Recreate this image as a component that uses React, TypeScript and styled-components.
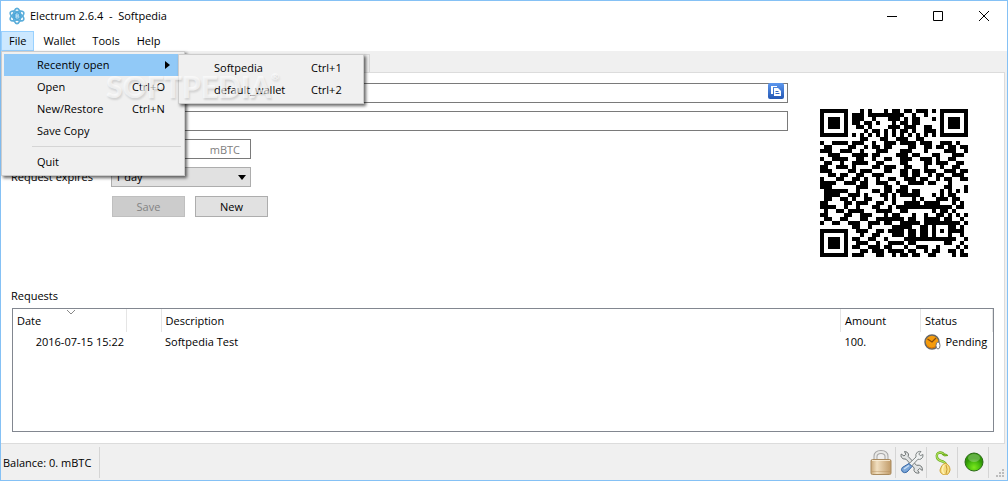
import React from 'react';
import styled, { createGlobalStyle } from 'styled-components';

const GlobalStyle = createGlobalStyle`
  *, *::before, *::after { box-sizing: border-box; }
  body { margin: 0; }
  body, button, input, select, table {
    font-family: "Open Sans", "Noto Sans", sans-serif;
    font-size: 11px;
    line-height: 16px;
    color: #000;
  }
`;

const Window = styled.div`
  display: flex;
  flex-direction: column;
  min-height: 100vh;
  border: 1px solid #85c1f5;
  background: #f0f0f0;
`;

const TitleBar = styled.header`
  display: flex;
  align-items: center;
  height: 30px;
  padding-left: 8px;
  background: #fff;
`;

const Title = styled.h1`
  flex: 1;
  margin: 0 0 0 5px;
  font-size: 11px;
  font-weight: 400;
  white-space: pre;
`;

const WindowButton = styled.button`
  display: grid;
  place-items: center;
  width: 46px;
  height: 30px;
  padding: 0;
  border: 0;
  background: transparent;
`;

const MenuBar = styled.nav`
  display: flex;
  gap: 1px;
  height: 20px;
  background: #fff;
`;

const MenuAnchor = styled.div`
  position: relative;
`;

const MenuTitle = styled.button<{ $open?: boolean }>`
  height: 20px;
  padding: 0 7px;
  border: 1px solid ${p => (p.$open ? '#99d1ff' : 'transparent')};
  background: ${p => (p.$open ? '#cce8ff' : 'transparent')};
  line-height: 18px;
`;

const Menu = styled.div<{ $sub?: boolean }>`
  position: absolute;
  z-index: ${p => (p.$sub ? 3 : 2)};
  top: ${p => (p.$sub ? '0' : '20px')};
  left: ${p => (p.$sub ? '174px' : '0')};
  width: ${p => (p.$sub ? '186px' : '184px')};
  padding: 2px;
  border: 1px solid #ccc;
  background: #f0f0f0;
  box-shadow: 2px 2px 3px rgba(0, 0, 0, 0.6);
`;

const MenuItemRow = styled.div`
  position: relative;
`;

const MenuItem = styled.button<{ $active?: boolean }>`
  display: flex;
  align-items: center;
  width: 100%;
  height: 22px;
  padding: 0 8px 0 33px;
  border: 0;
  background: ${p => (p.$active ? '#91c9f7' : 'transparent')};
  text-align: left;

  span { width: 42px; margin-left: auto; }
  svg { margin: 0 4px 0 auto; }
`;

const MenuRule = styled.hr`
  height: 1px;
  margin: 4px 1px 4px 28px;
  border: 0;
  background: #d5d5d5;
`;

const Watermark = styled.div`
  position: absolute;
  z-index: 4;
  top: 37px;
  left: 105px;
  display: flex;
  font-family: Lato, sans-serif;
  font-size: 30px;
  font-weight: 900;
  line-height: 36px;
  color: rgba(255, 255, 255, 0.6);
  text-shadow: 1px 2px 2px rgba(0, 0, 0, 0.12);
  pointer-events: none;

  sup { font-size: 10px; line-height: 16px; }
`;

const TabStrip = styled.div`
  height: 21px;
  padding: 3px 0 0 2px;
`;

const Tab = styled.div`
  width: 367px;
  height: 18px;
  border: 1px solid #d9d9d9;
  border-bottom: 0;
`;

const Pane = styled.main`
  display: flex;
  flex: 1;
  flex-direction: column;
  margin: 0 2px 0 0;
  padding: 10px 10px 11px;
  border: 1px solid #dcdcdc;
  border-left-width: 0;
  background: #fff;
`;

const Receive = styled.section`
  display: flex;
  gap: 32px;
  padding-right: 26px;
`;

const Form = styled.form`
  display: flex;
  flex: 1;
  flex-direction: column;
  gap: 8px;
`;

const Field = styled.div`
  display: flex;
  align-items: center;
  height: 20px;
  padding-left: 100px;
  position: relative;
`;

const LabelledField = styled(Field)`
  padding-left: 0;
`;

const FieldLabel = styled.label`
  width: 100px;
`;

const TextBox = styled.input<{ $short?: boolean }>`
  width: ${p => (p.$short ? '140px' : '100%')};
  height: 20px;
  padding: 0 10px;
  border: 1px solid #7a7a7a;
  background: #fff;
  text-align: ${p => (p.$short ? 'right' : 'left')};

  &::placeholder { color: #808080; opacity: 1; }
`;

const CopyButton = styled.button`
  position: absolute;
  top: 0;
  right: 4px;
  width: 16px;
  height: 16px;
  padding: 0;
  border: 0;
  background: transparent;

  svg { display: block; }
`;

const SelectBox = styled.div`
  position: relative;
  width: 140px;

  select {
    display: block;
    width: 100%;
    height: 20px;
    padding: 0 3px;
    border: 1px solid #adadad;
    border-radius: 0;
    background: #e1e1e1;
    appearance: none;
  }

  svg {
    position: absolute;
    top: 8px;
    right: 5px;
    pointer-events: none;
  }
`;

const Buttons = styled.div`
  display: flex;
  gap: 10px;
  padding: 1px 0 0 101px;
`;

const PushButton = styled.button`
  width: 73px;
  height: 21px;
  padding: 0;
  border: 1px solid #adadad;
  background: #e1e1e1;
  line-height: 18px;

  &:disabled { border-color: #bfbfbf; background: #ccc; color: #838383; }
`;

const QrFrame = styled.div`
  padding-top: 26px;

  svg { display: block; }
`;

const SectionTitle = styled.h2`
  margin: 31px 0 4px;
  font-size: 11px;
  font-weight: 400;
`;

const TableFrame = styled.div`
  flex: 1;
  min-height: 124px;
  margin-left: 1px;
  border: 1px solid #828790;
`;

const RequestsTable = styled.table`
  width: 100%;
  border-collapse: collapse;
  table-layout: fixed;

  th, td { padding: 0 4px; font-weight: 400; text-align: left; white-space: nowrap; }
  th { position: relative; height: 23px; border-right: 1px solid #e5e5e5; }
  td { height: 20px; }
  td:first-child { padding: 0 2px; text-align: right; }
  td:last-child { padding: 0 3px; }
  th svg { position: absolute; top: 1px; left: 54px; }
`;

const StatusCell = styled.span`
  display: flex;
  align-items: center;
  gap: 5px;
`;

const StatusBar = styled.footer`
  display: flex;
  align-items: center;
  height: 36px;
  padding: 2px 3px 2px 2px;
`;

const Balance = styled.div`
  display: flex;
  flex: 1;
  align-items: center;

  span {
    min-width: 97px;
    padding-right: 4px;
    border-right: 1px solid #d5d5d5;
    line-height: 31px;
  }
`;

const StatusButton = styled.button`
  display: grid;
  place-items: center;
  width: 31px;
  height: 31px;
  padding: 0 0 0 2px;
  border: 0;
  border-right: 1px solid #d5d5d5;
  background: transparent;
`;

const Grip = styled.div`
  align-self: flex-end;
  margin-left: 7px;

  svg { display: block; }
`;

const QR_ROWS = [
  '0000000000101000101101101110100000000',
  '0000000011101111111110010010000000000',
  '0000000011100100011101011000100000000',
  '0000000011011010001011011000000000000',
  '0000000001101000011101110011000000000',
  '0000000000010110101011010011100000000',
  '0000000010101010101010101010100000000',
  '0000000000110001100111001100000000000',
  '1001111011100100111011110111001110100',
  '0110000110010110110000110011011011011',
  '1110011100100011100011100010000111001',
  '0011100011110110000111011000110001110',
  '1001111001100100110011100111010011000',
  '0110010011110011000011000011011100110',
  '1100111010000110111001100010001001100',
  '1110000110111000110011011011100111011',
  '0011011001100111000011011001011001110',
  '1000110011010010011001110110010110011',
  '1111001110110011100100111101100010000',
  '1110000001110000110011000000000110001',
  '0111111001000110110111011000001010101',
  '0111100111010001101011111000101011000',
  '0110011010011000101000010100011101100',
  '1100001101110011001001111011110001010',
  '1111001001000110010111111111111110110',
  '0100110111100011110011000000101101000',
  '1100001100111000101100010010011010101',
  '0110011000110011111110110011110110010',
  '1001100111001110110011111011111001101',
  '0000000011001000001111100110001011010',
  '0000000001110011011110110110101011110',
  '0000000000100110001110110110001010010',
  '0000000011001100100001111111111111001',
  '0000000001110010011110110000000110010',
  '0000000011001110110001001110010000101',
  '0000000000110111011110110010110011010',
  '0000000011100011001011011001100001011',
];

function qrCell(row: number, col: number) {
  for (const [top, left] of [[0, 0], [0, 30], [30, 0]]) {
    const y = row - top;
    const x = col - left;
    if (y >= -1 && y <= 7 && x >= -1 && x <= 7) {
      const d = Math.max(Math.abs(y - 3), Math.abs(x - 3));
      return d === 3 || d < 2;
    }
  }
  if (Math.abs(row - 30) <= 2 && Math.abs(col - 30) <= 2) {
    return Math.max(Math.abs(row - 30), Math.abs(col - 30)) !== 1;
  }
  return QR_ROWS[row][col] === '1';
}

function QrCode() {
  const path = QR_ROWS.flatMap((cells, r) =>
    cells.split('').map((_, c) => (qrCell(r, c) ? `M${c} ${r}h1v1h-1z` : '')),
  ).join('');
  return (
    <svg width="148" height="148" viewBox="0 0 37 37" shapeRendering="crispEdges" role="img" aria-label="Payment request QR code">
      <path d={path} />
    </svg>
  );
}

function Logo() {
  return (
    <svg width="16" height="18" viewBox="0 0 16 18" fill="none" stroke="#5badda" aria-hidden="true">
      <g strokeWidth="1.600">
        <ellipse cx="8" cy="9" rx="3.600" ry="7.600" />
        <ellipse cx="8" cy="9" rx="3.600" ry="7.600" transform="rotate(60 8 9)" />
        <ellipse cx="8" cy="9" rx="3.600" ry="7.600" transform="rotate(120 8 9)" />
      </g>
      <circle cx="8" cy="9" r="3.600" fill="#4ba6d9" stroke="none" />
      <path d="M7 7h1.500q1 0 1 1t-1 1H7zm0 2h2q1 0 1 1t-1 1H7z" stroke="#d8effb" strokeWidth=".8" />
    </svg>
  );
}

function CopyIcon() {
  return (
    <svg width="16" height="16" viewBox="0 0 16 16">
      <defs>
        <linearGradient id="copy" x2="0" y2="1"><stop stopColor="#5c97ee" /><stop offset="1" stopColor="#2659b5" /></linearGradient>
      </defs>
      <rect width="16" height="16" rx="2" fill="url(#copy)" />
      <path d="M3 3h6v1H5v7H3z" fill="#fff" />
      <path d="M6 5h4l3 3v5H6z" fill="#fff" />
      <path d="M7.500 8.500h3M7.500 10.500h4" stroke="#3268c4" />
    </svg>
  );
}

function LockIcon() {
  return (
    <svg width="22" height="25" viewBox="0 0 22 25">
      <defs>
        <linearGradient id="brass"><stop stopColor="#c9a878" /><stop offset=".3" stopColor="#f1dfc0" /><stop offset="1" stopColor="#c09a68" /></linearGradient>
      </defs>
      <path d="M5.500 13V6.500Q5.500 2 11 2t5.500 4.500V13" fill="none" stroke="#a5a5a5" strokeWidth="4" />
      <path d="M5.500 13V6.500Q5.500 2 11 2t5.500 4.500V13" fill="none" stroke="#e9e9e7" strokeWidth="2" />
      <rect x="1" y="9.500" width="20" height="15" rx="1.500" fill="url(#brass)" stroke="#a98a5e" />
      <path d="M2 10.500h18" stroke="#fbf1dc" strokeOpacity=".8" />
      <path d="M2 21.500h18" stroke="#b48b59" strokeOpacity=".4" />
    </svg>
  );
}

function ToolsIcon() {
  return (
    <svg width="24" height="24" viewBox="0 0 24 24">
      <path d="M4.500 1.500q3 0 4 2.500l-.3 2.500 8.300 8.800q3-.8 5 1.200 1.300 2 .8 4l-2.600-2-2 1.800 1.500 2.700q-4 .8-5.200-2.500l.2-2.500L6 9.200Q2.500 9.500 1.200 7 .8 5.500 1.200 4L4 6l1.800-1.700z" fill="#e2e4e4" stroke="#6f7575" />
      <path d="M16 7q-1-3 1.500-5 2-1 3.500-.5L18.800 4l1.500 1.700 2.700-1.200q.5 3-2 4.500-1.500.8-3 .2l-6.500 7-2.500-2.500z" fill="#eef0f0" stroke="#808686" />
      <path d="M9 13.500l3 3-5 5.500q-2.500 1.500-4.700-.3-1.700-2.200 0-4.200z" fill="#7ba6d8" stroke="#3465a4" />
      <path d="M4 19l5-3.500" stroke="#c9def5" strokeWidth="1.500" />
    </svg>
  );
}

function SeedIcon() {
  return (
    <svg width="18" height="25" viewBox="0 0 18 25">
      <path d="M12 15q0-2-3-3.500-5-1-6-4-1-4.500 3-5 3 0 4 2.500" fill="none" stroke="#64a718" strokeWidth="2.400" />
      <path d="M12 15q0-2-3-3.500-5-1-6-4-1-4.500 3-5 3 0 4 2.500" fill="none" stroke="#b3e263" strokeWidth="1.200" />
      <path d="M8.500 4.500q4-1.500 5.500 1-4 1.500-5.500-1z" fill="#8cce2b" stroke="#5d9c14" strokeWidth=".7" />
      <path d="M11 13q5 2 5 7-1 5-5 5-5-1-5-5 1-5 5-7z" fill="#f5dc80" stroke="#cfa035" />
      <path d="M10 15q-3 5 0 9" fill="none" stroke="#fff0b0" strokeWidth="1.500" />
      <path d="M12 15q2 4 0 9" fill="none" stroke="#c79a35" />
    </svg>
  );
}

function ConnectedIcon() {
  return (
    <svg width="20" height="20" viewBox="0 0 20 20">
      <defs>
        <radialGradient id="led" cy=".8"><stop stopColor="#7be81c" /><stop offset=".6" stopColor="#4cc00f" /><stop offset="1" stopColor="#2f9606" /></radialGradient>
      </defs>
      <circle cx="10" cy="10" r="9" fill="url(#led)" stroke="#2c6a18" />
      <ellipse cx="10" cy="6" rx="6" ry="4" fill="#fff" opacity=".25" />
    </svg>
  );
}

function PendingIcon() {
  return (
    <svg width="17" height="17" viewBox="0 0 17 17" aria-hidden="true">
      <circle cx="8" cy="8" r="7" fill="#f59b0b" stroke="#666" strokeWidth="1.500" />
      <path d="M3.500 5l4.500 3 4-4" fill="none" stroke="#87490b" strokeWidth="1.200" />
      <path d="M3 12q5 4 9 0" fill="none" stroke="#d56f00" />
      <ellipse cx="14" cy="11.500" rx="2" ry="3.500" fill="#fff" stroke="#777" />
    </svg>
  );
}

export default function App() {
  return (
    <>
      <GlobalStyle />
      <Window>
        <TitleBar>
          <Logo />
          <Title>{'Electrum 2.6.4  -  Softpedia'}</Title>
          <WindowButton aria-label="Minimize">
            <svg width="10" height="10"><path d="M0 5.500h10" stroke="#000" /></svg>
          </WindowButton>
          <WindowButton aria-label="Maximize">
            <svg width="10" height="10"><path d="M.5.5h9v9h-9z" fill="none" stroke="#000" /></svg>
          </WindowButton>
          <WindowButton aria-label="Close">
            <svg width="10" height="10"><path d="M0 0l10 10M10 0L0 10" stroke="#000" /></svg>
          </WindowButton>
        </TitleBar>

        <MenuBar aria-label="Main menu">
          <MenuAnchor>
            <MenuTitle $open aria-expanded="true">File</MenuTitle>
            <Menu>
              <MenuItemRow>
                <MenuItem $active aria-expanded="true">
                  Recently open
                  <svg width="5" height="8"><path d="M0 0l5 4-5 4z" /></svg>
                </MenuItem>
                <Menu $sub>
                  <MenuItem>Softpedia<span>Ctrl+1</span></MenuItem>
                  <MenuItem>default_wallet<span>Ctrl+2</span></MenuItem>
                </Menu>
              </MenuItemRow>
              <MenuItem>Open<span>Ctrl+O</span></MenuItem>
              <MenuItem>New/Restore<span>Ctrl+N</span></MenuItem>
              <MenuItem>Save Copy</MenuItem>
              <MenuRule />
              <MenuItem>Quit</MenuItem>
            </Menu>
            <Watermark>SOFTPEDIA<sup>®</sup></Watermark>
          </MenuAnchor>
          <MenuTitle>Wallet</MenuTitle>
          <MenuTitle>Tools</MenuTitle>
          <MenuTitle>Help</MenuTitle>
        </MenuBar>

        <TabStrip><Tab /></TabStrip>

        <Pane>
          <Receive>
            <Form onSubmit={e => e.preventDefault()}>
              <Field>
                <TextBox aria-label="Receiving address" readOnly />
                <CopyButton type="button" aria-label="Copy address"><CopyIcon /></CopyButton>
              </Field>
              <Field><TextBox aria-label="Description" /></Field>
              <Field><TextBox $short aria-label="Requested amount" placeholder="mBTC" /></Field>
              <LabelledField>
                <FieldLabel htmlFor="expires">Request expires</FieldLabel>
                <SelectBox>
                  <select id="expires"><option>1 day</option></select>
                  <svg width="8" height="5"><path d="M0 0h8L4 5z" /></svg>
                </SelectBox>
              </LabelledField>
              <Buttons>
                <PushButton type="button" disabled>Save</PushButton>
                <PushButton type="button">New</PushButton>
              </Buttons>
            </Form>
            <QrFrame><QrCode /></QrFrame>
          </Receive>

          <SectionTitle>Requests</SectionTitle>
          <TableFrame>
            <RequestsTable>
              <colgroup>
                <col style={{ width: 113 }} />
                <col style={{ width: 35 }} />
                <col />
                <col style={{ width: 80 }} />
                <col style={{ width: 72 }} />
              </colgroup>
              <thead>
                <tr>
                  <th>Date<svg width="8" height="5"><path d="M0 0l4 4 4-4" fill="none" stroke="#888" /></svg></th>
                  <th aria-label="Type" />
                  <th>Description</th>
                  <th>Amount</th>
                  <th>Status</th>
                </tr>
              </thead>
              <tbody>
                <tr>
                  <td>2016-07-15 15:22</td>
                  <td />
                  <td>Softpedia Test</td>
                  <td>100.</td>
                  <td><StatusCell><PendingIcon />Pending</StatusCell></td>
                </tr>
              </tbody>
            </RequestsTable>
          </TableFrame>
        </Pane>

        <StatusBar>
          <Balance><span>Balance: 0. mBTC</span></Balance>
          <StatusButton aria-label="Password"><LockIcon /></StatusButton>
          <StatusButton aria-label="Preferences"><ToolsIcon /></StatusButton>
          <StatusButton aria-label="Seed"><SeedIcon /></StatusButton>
          <StatusButton aria-label="Network"><ConnectedIcon /></StatusButton>
          <Grip>
            <svg width="8" height="9" fill="#bcbcbc"><path d="M6 0h2v2H6zM3 3h2v2H3zM6 3h2v2H6zM0 6h2v2H0zM3 6h2v2H3zM6 6h2v2H6z" /></svg>
          </Grip>
        </StatusBar>
      </Window>
    </>
  );
}
